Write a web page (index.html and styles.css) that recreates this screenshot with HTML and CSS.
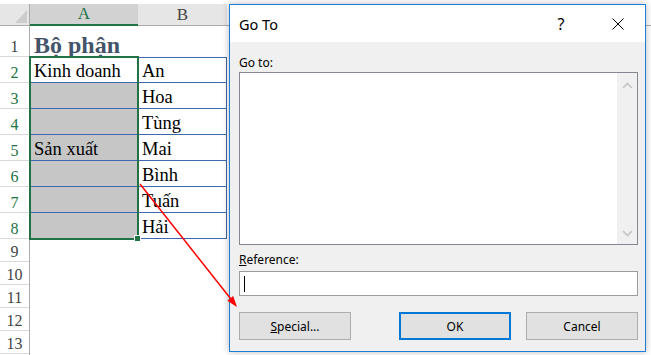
FILE: index.html
```html
<!DOCTYPE html>
<html lang="vi">
<head>
<meta charset="utf-8">
<title>Go To</title>
<link rel="stylesheet" href="styles.css">
</head>
<body>
<div class="screen">
  <div class="sheet">
    <div class="col col-hdr">
      <div class="hcell corner"><span class="tri"></span></div>
      <div class="rh r1">1</div>
      <div class="rh r26 on">2</div>
      <div class="rh r26 on">3</div>
      <div class="rh r26 on">4</div>
      <div class="rh r26 on">5</div>
      <div class="rh r26 on">6</div>
      <div class="rh r26 on">7</div>
      <div class="rh r26 on">8</div>
      <div class="rh r23">9</div>
      <div class="rh r23">10</div>
      <div class="rh r23">11</div>
      <div class="rh r23">12</div>
      <div class="rh r23">13</div>
    </div>
    <div class="col col-a">
      <div class="hcell hsel">A</div>
      <div class="cell r1 heading">Bộ phận</div>
      <div class="selection">
        <div class="cell r26 in">Kinh doanh</div>
        <div class="cell r26 in shade"></div>
        <div class="cell r26 in shade"></div>
        <div class="cell r26 in shade">Sản xuất</div>
        <div class="cell r26 in shade"></div>
        <div class="cell r26 in shade"></div>
        <div class="cell r26 in shade"></div>
        <span class="handle"></span>
      </div>
    </div>
    <div class="col col-b">
      <div class="hcell">B</div>
      <div class="cell r1"></div>
      <div class="cell r26 tb first">An</div>
      <div class="cell r26 tb">Hoa</div>
      <div class="cell r26 tb">Tùng</div>
      <div class="cell r26 tb">Mai</div>
      <div class="cell r26 tb">Bình</div>
      <div class="cell r26 tb">Tuấn</div>
      <div class="cell r26 tb">Hải</div>
    </div>
    <div class="col col-rest">
      <div class="hcell blank"></div>
    </div>
  </div>

  <div class="dialog">
    <div class="titlebar">
      <span class="dlg-title">Go To</span>
      <span class="help">?</span>
      <span class="close">
        <svg width="12" height="12" viewBox="0 0 12 12"><path d="M0.5 0.5 L11.5 11.5 M11.5 0.5 L0.5 11.5" stroke="#000" stroke-width="1" fill="none"/></svg>
      </span>
    </div>
    <div class="body">
      <div class="label">Go to:</div>
      <div class="listbox">
        <div class="scrollbar">
          <svg width="11" height="7" viewBox="0 0 11 7"><polyline points="1,6 5.5,1.5 10,6" fill="none" stroke="#c4c4c4" stroke-width="1.6"/></svg>
          <svg width="11" height="7" viewBox="0 0 11 7"><polyline points="1,1 5.5,5.5 10,1" fill="none" stroke="#c4c4c4" stroke-width="1.6"/></svg>
        </div>
      </div>
      <div class="label label-ref"><u>R</u>eference:</div>
      <div class="input"><span class="caret"></span></div>
      <div class="buttons">
        <div class="btn"><u>S</u>pecial...</div>
        <div class="btn btn-ok">OK</div>
        <div class="btn">Cancel</div>
      </div>
    </div>
  </div>

  <svg class="arrow" width="651" height="355" viewBox="0 0 651 355">
    <line x1="140" y1="184" x2="230.5" y2="298.5" stroke="#ff0000" stroke-width="1.5"/>
    <polygon points="237,307 227.3,300.8 233.2,296.0" fill="#ff0000"/>
  </svg>
</div>
</body>
</html>
```

FILE: styles.css
```css
html, body {
  margin: 0;
  padding: 0;
  background: #ffffff;
}

.screen {
  position: relative;
  width: 651px;
  height: 355px;
  overflow: hidden;
  background: #ffffff;
}

.sheet {
  display: flex;
  padding-top: 4px;
  height: 355px;
  box-sizing: border-box;
}

.col {
  display: flex;
  flex-direction: column;
}

.col-hdr {
  flex: 0 0 30px;
  box-sizing: border-box;
  border-right: 1px solid #ababab;
}

.col-a {
  flex: 0 0 108px;
}

.col-b {
  flex: 0 0 89px;
}

.col-rest {
  flex: 1 1 auto;
}

.hcell {
  height: 22px;
  box-sizing: border-box;
  background: #e6e6e6;
  border-bottom: 1px solid #ababab;
  display: flex;
  align-items: center;
  justify-content: center;
  font-family: "Liberation Serif", serif;
  font-size: 17px;
  color: #444444;
}

.hsel {
  background: #d2d2d2;
  color: #217346;
  border-bottom: 2px solid #217346;
}

.blank {
  background: #ffffff;
}

.corner {
  justify-content: flex-end;
  align-items: flex-end;
  padding: 0 2px 2px 0;
}

.tri {
  display: block;
  width: 12px;
  height: 13px;
  background: #cccccc;
  clip-path: polygon(100% 0, 100% 100%, 0 100%);
}

.rh {
  box-sizing: border-box;
  display: flex;
  justify-content: center;
  align-items: flex-end;
  border-bottom: 1px solid #dadada;
  font-family: "Liberation Serif", serif;
  font-size: 16px;
  line-height: 18px;
  color: #444444;
}

.rh.on {
  color: #217346;
}

.r1 { height: 31px; }
.r26 { height: 26px; }
.r23 { height: 23px; }

.cell {
  box-sizing: border-box;
  display: flex;
  align-items: flex-end;
  padding-left: 4px;
  white-space: nowrap;
  font-family: "Liberation Serif", serif;
  font-size: 18.5px;
  line-height: 22px;
  color: #000000;
}

.heading {
  font-weight: bold;
  font-size: 24px;
  line-height: 24px;
  color: #44546a;
  overflow: visible;
}

.selection {
  position: relative;
  display: flex;
  flex-direction: column;
  outline: 2px solid #217346;
  outline-offset: -1px;
}

.in {
  border-bottom: 1px solid #3f67b0;
  background: #ffffff;
}

.shade {
  background: #c6c6c6;
}

.handle {
  position: absolute;
  right: -3px;
  bottom: -3px;
  width: 5px;
  height: 5px;
  background: #217346;
  border: 1px solid #ffffff;
}

.tb {
  border-right: 1px solid #3f67b0;
  border-bottom: 1px solid #3f67b0;
  background: #ffffff;
}

.tb.first {
  border-top: 1px solid #3f67b0;
}

/* dialog */
.dialog {
  position: absolute;
  left: 229px;
  top: 4px;
  width: 417px;
  height: 348px;
  box-sizing: border-box;
  border: 1px solid #1a7fd4;
  background: #f0f0f0;
  box-shadow: 0 0 7px rgba(0, 0, 0, 0.28);
  display: flex;
  flex-direction: column;
  font-family: "Noto Sans", "Liberation Sans", sans-serif;
  color: #000000;
  z-index: 5;
}

.titlebar {
  height: 37px;
  flex: 0 0 37px;
  background: #ffffff;
  display: flex;
  align-items: center;
  padding-left: 9px;
}

.dlg-title {
  font-size: 14.5px;
  line-height: 20px;
}

.help {
  margin-left: auto;
  width: 60px;
  text-align: center;
  font-size: 16px;
  line-height: 20px;
}

.close {
  width: 54px;
  display: flex;
  justify-content: center;
  align-items: center;
}

.body {
  flex: 1 1 auto;
  padding: 13px 7px 0 9px;
  display: flex;
  flex-direction: column;
}

.label {
  font-size: 12px;
  line-height: 16px;
  margin-bottom: 1px;
}

.label-ref {
  margin-top: 7px;
  margin-bottom: 3px;
}

.listbox {
  height: 173px;
  box-sizing: border-box;
  border: 1px solid #828790;
  background: #ffffff;
  display: flex;
  justify-content: flex-end;
}

.scrollbar {
  width: 20px;
  background: #f0f0f0;
  display: flex;
  flex-direction: column;
  justify-content: space-between;
  align-items: center;
  padding: 9px 0 7px;
}

.input {
  height: 25px;
  box-sizing: border-box;
  border: 1px solid #9c9c9c;
  background: #ffffff;
  display: flex;
  align-items: center;
  padding-left: 4px;
}

.caret {
  display: block;
  width: 1px;
  height: 16px;
  background: #000000;
}

.buttons {
  margin-top: 16px;
  display: flex;
  gap: 15px;
}

.btn {
  width: 112px;
  height: 28px;
  box-sizing: border-box;
  background: #e1e1e1;
  border: 1px solid #adadad;
  display: flex;
  align-items: center;
  justify-content: center;
  font-size: 12px;
}

.btn-ok {
  margin-left: auto;
  border: 2px solid #0078d7;
}

.arrow {
  position: absolute;
  left: 0;
  top: 0;
  z-index: 10;
  pointer-events: none;
}
```
